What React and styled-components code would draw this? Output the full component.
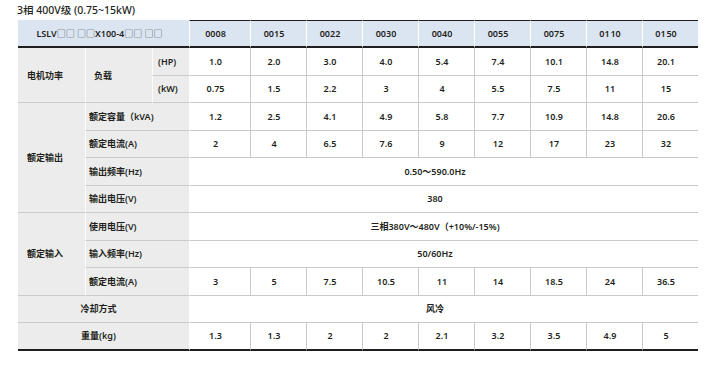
import React from "react";
import styled, { createGlobalStyle } from "styled-components";

const Global = createGlobalStyle`
  html, body { margin: 0; padding: 0; background: #fff; }
  body { font-family: "Noto Sans", "Noto Sans CJK SC", sans-serif; color: #231f20; }
`;

const Page = styled.div`
  padding: 3px 0 0 18px;
  width: 715px;
  box-sizing: border-box;
`;

const Title = styled.div`
  font-size: 10.5px;
  font-weight: 500;
  height: 17px;
  line-height: 15px;
  margin-left: -1px;
`;

const Table = styled.table`
  border-collapse: separate;
  border-spacing: 0;
  table-layout: fixed;
  width: 679px;
  font-size: 9px;
  font-weight: 600;
  line-height: 1;
`;

const HeadCell = styled.th`
  background: #dbe5f1;
  height: 28px;
  box-sizing: border-box;
  font-weight: 600;
  text-align: center;
  padding: 0 ${(p) => (p.$first ? 8 : 9)}px 0 0;
  border-bottom: 2px solid #1e1e1e;
  border-top: ${(p) => (p.$first ? "none" : "1.5px solid #1e1e1e")};
  border-left: ${(p) => (p.$first ? "none" : "1.5px solid #fff")};
  white-space: nowrap;
`;

const Box = styled.span`
  font-family: "Noto Sans CJK SC", sans-serif;
  font-weight: 300;
  font-size: 9px;
  color: #333;
`;

const Row = styled.tr`
  height: 27.5px;
`;

const LabelCell = styled.td`
  background: #ececec;
  box-sizing: border-box;
  text-align: ${(p) => (p.$center ? "center" : "left")};
  padding: ${(p) => (p.$center ? "0 10px 0 0" : `0 0 0 ${p.$pad ?? 8}px`)};
  border-bottom: ${(p) => (p.$last ? "2px solid #1e1e1e" : "1.5px solid #cbcbcb")};
  border-left: ${(p) => (p.$edge ? "none" : "1.5px solid #fbfbfb")};
  white-space: nowrap;
`;

const DataCell = styled.td`
  background: #fff;
  box-sizing: border-box;
  text-align: center;
  padding: 0 ${(p) => (p.$span ? 18 : 9)}px 0 0;
  border-bottom: ${(p) => (p.$last ? "2px solid #1e1e1e" : "1.5px solid #c9c9c9")};
  border-left: 1.5px solid ${(p) => (p.$first ? "#fff" : "#c9c9c9")};
  white-space: nowrap;
`;

const models = ["0008", "0015", "0022", "0030", "0040", "0055", "0075", "01\u200A10", "01\u200A50"];

const hp = ["1.0", "2.0", "3.0", "4.0", "5.4", "7.4", "10.1", "14.8", "20.1"];
const kw = ["0.75", "1.5", "2.2", "3", "4", "5.5", "7.5", "11", "15"];
const kva = ["1.2", "2.5", "4.1", "4.9", "5.8", "7.7", "10.9", "14.8", "20.6"];
const outA = ["2", "4", "6.5", "7.6", "9", "12", "17", "23", "32"];
const inA = ["3", "5", "7.5", "10.5", "11", "14", "18.5", "24", "36.5"];
const weight = ["1.3", "1.3", "2", "2", "2.1", "3.2", "3.5", "4.9", "5"];

const Cells = ({ values, last }) =>
  values.map((v, i) => (
    <DataCell key={i} $first={i === 0} $last={last}>
      {v}
    </DataCell>
  ));

const Span = ({ children, last }) => (
  <DataCell colSpan={9} $first $span $last={last}>
    {children}
  </DataCell>
);

export default function App() {
  return (
    <Page>
      <Global />
      <Title>3相 400V级 (0.75~15kW)</Title>
      <Table>
        <colgroup>
          <col style={{ width: 67 }} />
          <col style={{ width: 67 }} />
          <col style={{ width: 37 }} />
          <col style={{ width: 61 }} />
          {models.slice(1).map((m) => (
            <col key={m} style={{ width: 56 }} />
          ))}
        </colgroup>
        <thead>
          <tr>
            <HeadCell colSpan={3} $first>
              LSLV<Box>□□</Box> <Box>□□</Box>X100-4<Box>□□</Box> <Box>□□</Box>
            </HeadCell>
            {models.map((m) => (
              <HeadCell key={m}>{m}</HeadCell>
            ))}
          </tr>
        </thead>
        <tbody>
          <Row>
            <LabelCell rowSpan={2} $edge $pad={9}>电机功率</LabelCell>
            <LabelCell rowSpan={2}>负载</LabelCell>
            <LabelCell $pad={5}>(HP)</LabelCell>
            <Cells values={hp} />
          </Row>
          <Row>
            <LabelCell $pad={5}>(kW)</LabelCell>
            <Cells values={kw} />
          </Row>
          <Row>
            <LabelCell rowSpan={4} $edge $pad={9}>额定输出</LabelCell>
            <LabelCell colSpan={2} $pad={3}>额定容量（kVA)</LabelCell>
            <Cells values={kva} />
          </Row>
          <Row>
            <LabelCell colSpan={2} $pad={3}>额定电流(A)</LabelCell>
            <Cells values={outA} />
          </Row>
          <Row>
            <LabelCell colSpan={2} $pad={3}>输出频率(Hz)</LabelCell>
            <Span>0.50～590.0Hz</Span>
          </Row>
          <Row>
            <LabelCell colSpan={2} $pad={3}>输出电压(V)</LabelCell>
            <Span>380</Span>
          </Row>
          <Row>
            <LabelCell rowSpan={3} $edge $pad={9}>额定输入</LabelCell>
            <LabelCell colSpan={2} $pad={3}>使用电压(V)</LabelCell>
            <Span>三相380V～480V（+10%/-15%)</Span>
          </Row>
          <Row>
            <LabelCell colSpan={2} $pad={3}>输入频率(Hz)</LabelCell>
            <Span>50/60Hz</Span>
          </Row>
          <Row>
            <LabelCell colSpan={2} $pad={3}>额定电流(A)</LabelCell>
            <Cells values={inA} />
          </Row>
          <Row>
            <LabelCell colSpan={3} $edge $center>冷却方式</LabelCell>
            <Span>风冷</Span>
          </Row>
          <Row>
            <LabelCell colSpan={3} $edge $center $last>重量(kg)</LabelCell>
            <Cells values={weight} last />
          </Row>
        </tbody>
      </Table>
    </Page>
  );
}
